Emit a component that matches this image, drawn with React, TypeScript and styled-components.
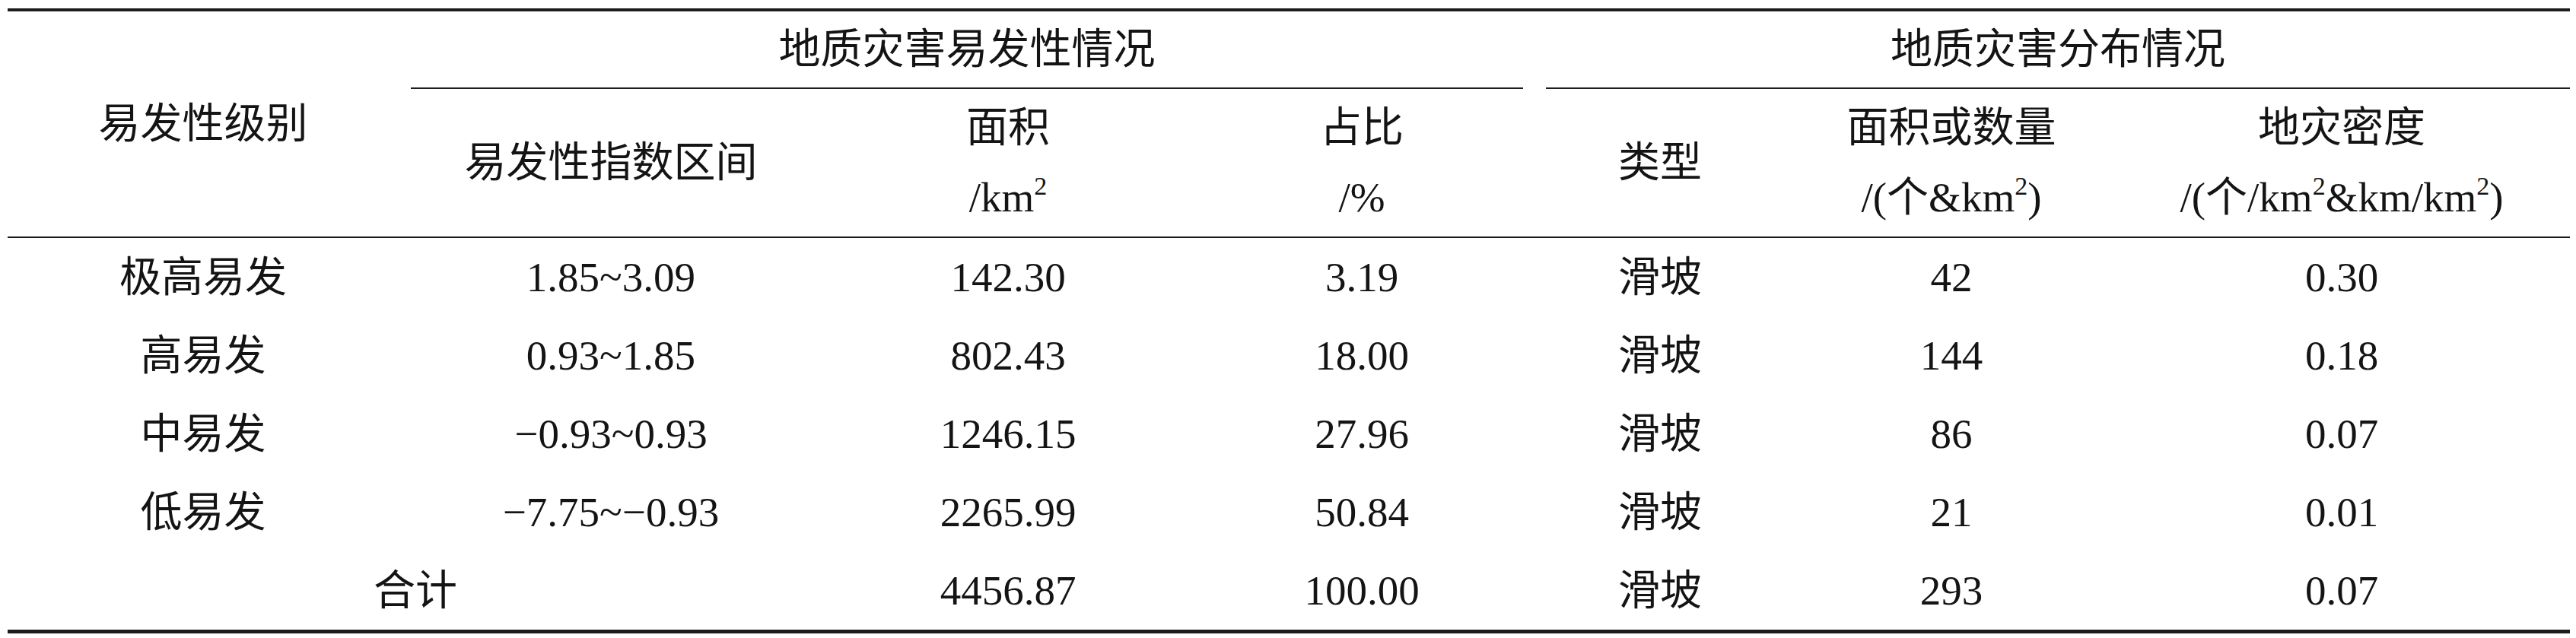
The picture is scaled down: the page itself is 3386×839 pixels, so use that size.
import React from 'react';
import styled, {createGlobalStyle} from "styled-components";

const GlobalStyle = createGlobalStyle`
  html, body {
    margin: 0;
    padding: 0;
    background: #ffffff;
  }

  body {
    font-family: "Liberation Serif", "Noto Sans CJK SC", serif;
    color: #141414;
  }
`

const colWidths = [514, 558, 486, 444, 340, 426, 600];

type Row = {
    level?: string;
    range?: string;
    area: string;
    ratio: string;
    kind: string;
    count: string;
    density: string;
};

const rows: Row[] = [
    {level: "极高易发", range: "1.85~3.09", area: "142.30", ratio: "3.19", kind: "滑坡", count: "42", density: "0.30"},
    {level: "高易发", range: "0.93~1.85", area: "802.43", ratio: "18.00", kind: "滑坡", count: "144", density: "0.18"},
    {level: "中易发", range: "\u22120.93~0.93", area: "1246.15", ratio: "27.96", kind: "滑坡", count: "86", density: "0.07"},
    {level: "低易发", range: "\u22127.75~\u22120.93", area: "2265.99", ratio: "50.84", kind: "滑坡", count: "21", density: "0.01"},
];

const total: Row = {area: "4456.87", ratio: "100.00", kind: "滑坡", count: "293", density: "0.07"};

export default function App() {
    return (
        <StyledPage>
            <GlobalStyle/>
            <StyledTable>
                <colgroup>
                    {colWidths.map((w, i) => <col key={i} style={{width: w}}/>)}
                </colgroup>
                <thead>
                <tr>
                    <HeadCell rowSpan={2} bordered>易发性级别</HeadCell>
                    <GroupCell colSpan={3}>
                        <GroupTitle inset={"0 10px 0 16px"}>地质灾害易发性情况</GroupTitle>
                    </GroupCell>
                    <GroupCell colSpan={3}>
                        <GroupTitle inset={"0 0 0 20px"}>地质灾害分布情况</GroupTitle>
                    </GroupCell>
                </tr>
                <tr>
                    <SubCell>易发性指数区间</SubCell>
                    <SubCell>面积<br/>/km<Sup>2</Sup></SubCell>
                    <SubCell>占比<br/>/%</SubCell>
                    <SubCell>类型</SubCell>
                    <SubCell>面积或数量<br/>/(个&amp;km<Sup>2</Sup>)</SubCell>
                    <SubCell>地灾密度<br/>/(个/km<Sup>2</Sup>&amp;km/km<Sup>2</Sup>)</SubCell>
                </tr>
                </thead>
                <tbody>
                {rows.map((r) => (
                    <BodyRow key={r.level}>
                        <td>{r.level}</td>
                        <td>{r.range}</td>
                        <td>{r.area}</td>
                        <td>{r.ratio}</td>
                        <td>{r.kind}</td>
                        <td>{r.count}</td>
                        <td>{r.density}</td>
                    </BodyRow>
                ))}
                <BodyRow>
                    <td colSpan={2}>合计</td>
                    <td>{total.area}</td>
                    <td>{total.ratio}</td>
                    <td>{total.kind}</td>
                    <td>{total.count}</td>
                    <td>{total.density}</td>
                </BodyRow>
                </tbody>
            </StyledTable>
        </StyledPage>
    );
}

const StyledPage = styled.div`
  padding: 11px 0 0 10px;
`

const StyledTable = styled.table`
  width: 3368px;
  table-layout: fixed;
  border-collapse: separate;
  border-spacing: 0;
  border-top: 4px solid #1c1c1c;
  border-bottom: 5px solid #1c1c1c;
  font-size: 55px;
  text-align: center;

  th, td {
    padding: 0;
    font-weight: normal;
    vertical-align: middle;
    white-space: nowrap;
  }
`

const HeadCell = styled.th<{ bordered?: boolean }>`
  line-height: 64px;
  border-bottom: ${({bordered}) => bordered ? "2px solid #1c1c1c" : "none"};
`

const GroupCell = styled.th`
  height: 102px;
`

const GroupTitle = styled.div<{ inset: string }>`
  display: flex;
  align-items: center;
  justify-content: center;
  height: 100px;
  margin: ${({inset}) => inset};
  border-bottom: 2px solid #1c1c1c;
  line-height: 64px;
`

const SubCell = styled.th`
  height: 194px;
  line-height: 92px;
  border-bottom: 2px solid #1c1c1c;
`

const Sup = styled.span`
  font-size: 34px;
  line-height: 0;
  vertical-align: 22px;
`

const BodyRow = styled.tr`
  td {
    height: 103px;
    line-height: 64px;
  }
`
